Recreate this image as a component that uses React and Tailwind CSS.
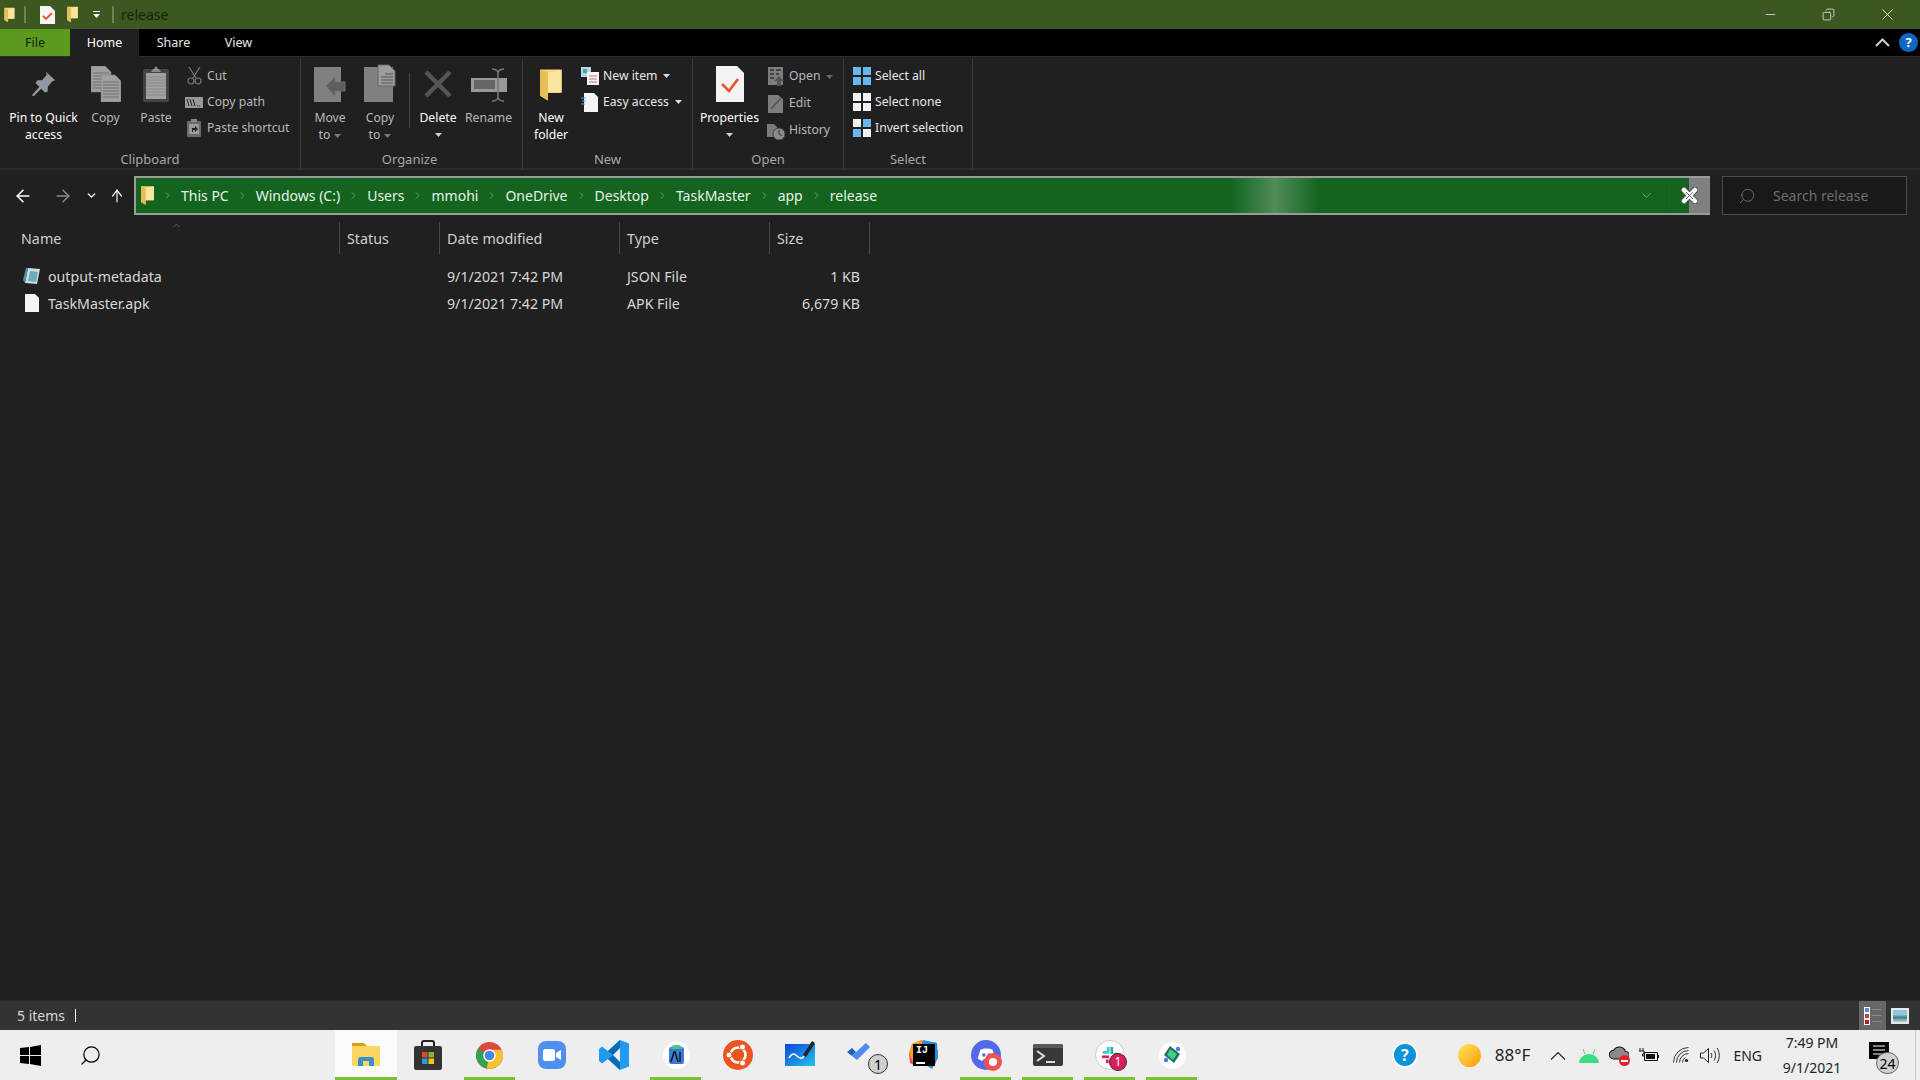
import React from "react";
import { ChevronRight, ChevronDown, ChevronUp, ArrowLeft, ArrowRight, ArrowUp, Search, Minus, X, Copy as CopyI } from "lucide-react";

const Caret = ({ c = "#d0d0d0" }) => (<svg width="7" height="4" viewBox="0 0 7 4" className="inline-block"><path d="M0 0h7L3.5 4z" fill={c} /></svg>);

const Folder = ({ w = 14, h = 22 }) => (
  <svg width={w} height={h} viewBox="0 0 14 22"><path d="M0 1h13v15l-8 0v5L0 18z" fill="#f8d775" /><path d="M5 3l9-2v15H5z" fill="#fbe49b" /><path d="M5 3v18l-5-3V1z" fill="#e8bd56" /></svg>
);

const PinI = () => (<svg width="30" height="28" viewBox="0 0 30 30" className="mb-[4px]"><path d="M17 2l10 9-3 1-5 6 0 5-3 1-4-4-8 8-2-1 8-9-4-4 2-3 5 0 5-6z" fill="#8e9aa0" /></svg>);
const DocLines = ({ x, y, w, h }) => (
  <g><path d={`M${x} ${y}h${w - 6}l6 6v${h - 6}h-${w}z`} fill="#a0a0a0" stroke="#7c7c7c" strokeWidth="0.6" />
    {[...Array(Math.floor((h - 8) / 3))].map((_, i) => <path key={i} d={`M${+x + 2} ${+y + 7 + i * 3}h${w - 4}`} stroke="#6f6f6f" strokeWidth="1" />)}</g>
);
const CopyBig = () => (<svg width="30" height="36" viewBox="0 0 30 36"><DocLines x="0" y="0" w="20" h="26" /><DocLines x="10" y="9" w="20" h="27" /></svg>);
const PasteBig = () => (<svg width="28" height="36" viewBox="0 0 28 36"><rect x="1" y="3" width="26" height="33" rx="2" fill="#444" /><rect x="4" y="7" width="20" height="26" fill="#a2a2a2" /><path d="M4 11h20M4 14h20M4 17h20M4 20h20M4 23h20M4 26h20M4 29h20" stroke="#888" /><path d="M9 6l2-3h1l2-3 2 3h1l2 3z" fill="#8c8c8c" /></svg>);
const MoveBig = () => (<svg width="34" height="36" viewBox="0 0 34 36"><rect x="1" y="1" width="27" height="35" fill="#808080" /><path d="M13 20l9-9v5h10v9H22v5z" fill="#5d5d5d" stroke="#707070" /></svg>);
const CopyToBig = () => (<svg width="34" height="38" viewBox="0 0 34 38"><rect x="1" y="3" width="29" height="35" fill="#808080" /><path d="M15 1h11l6 6v15H15z" fill="#9c9c9c" stroke="#666" /><path d="M22 10h8M18 13h12M18 16h12M18 19h12" stroke="#555" /></svg>);
const DelBig = () => (<svg width="30" height="30" viewBox="0 0 30 30" className="mb-[3px]"><path d="M3 3l24 24M27 3L3 27" stroke="#555" strokeWidth="4.5" /></svg>);
const RenameBig = () => (<svg width="36" height="34" viewBox="0 0 36 34"><rect x="0" y="10" width="36" height="14" fill="#999" /><rect x="3" y="12" width="21" height="9" fill="#666" /><path d="M21 1c3 0 5 1 6 3 1-2 3-3 6-3M27 4v26M21 33c3 0 5-1 6-3 1 2 3 3 6 3" stroke="#777" strokeWidth="1.6" fill="none" /></svg>);

const Big = ({ w, icon, label, label2, caret, bright, iconH = 43 }) => (
  <div className="flex flex-col items-center shrink-0" style={{ width: w }}>
    <div className="flex items-end justify-center" style={{ height: iconH }}>{icon}</div>
    <div className={`mt-[7px] text-center leading-[17px] whitespace-nowrap ${bright ? "text-[#ffffff]" : "text-[#b9b9b9]"}`}>{label}</div>
    {label2 && <div className={`text-center leading-[17px] whitespace-nowrap ${bright ? "text-[#ffffff]" : "text-[#b9b9b9]"}`}>{label2}{caret && <span className="ml-1 align-middle inline-flex"><Caret c="#7a7a7a" /></span>}</div>}
    {!label2 && caret && <div className="leading-[12px] mt-[2px]"><Caret /></div>}
  </div>
);

const Small = ({ icon, label, color = "text-[#b9b9b9]", caret, caretC, gap = "gap-[4px]", h = "h-[26px]" }) => (
  <div className={`flex items-center whitespace-nowrap ${gap} ${h} ${color}`}>
    <span className="w-[18px] h-[20px] flex items-center justify-center shrink-0">{icon}</span>
    <span>{label}</span>
    {caret && <span className="ml-[2px] flex"><Caret c={caretC} /></span>}
  </div>
);

const Group = ({ w, label, children, cls = "", labelCls = "" }) => (
  <div className="shrink-0 flex flex-col border-r border-[#3a3a3a] h-[111px]" style={{ width: w }}>
    <div className={`h-[92px] flex items-start ${cls}`}>{children}</div>
    <div className={`h-[17px] flex items-center justify-center text-[#a8a8a8] text-[13px] ${labelCls}`}>{label}</div>
  </div>
);

const SelIcon = ({ a, b, c, d }) => (
  <svg width="18" height="18" viewBox="0 0 18 18">
    {[[0, 0, a], [10, 0, b], [0, 10, c], [10, 10, d]].map(([x, y, f], i) => <rect key={i} x={x} y={y} width="8" height="8" fill={f} />)}
  </svg>
);
const B = "#68b5f0", W = "#f2f2f2";

const Col = ({ w, children }) => (
  <div className="h-full border-r border-[#4a4a4a] flex items-center shrink-0 pl-[7px] pt-[1px]" style={{ width: w }}>{children}</div>
);
const Cell = ({ w, children, right }) => (
  <div className={`shrink-0 whitespace-nowrap ${right ? "text-right pr-[10px]" : "pl-[7px]"}`} style={{ width: w }}>{children}</div>
);

const Row = ({ icon, name, type, size }) => (
  <div className="flex items-center h-[27px] text-[#d8d8d8] text-[14.2px]">
    <div className="w-[440px] flex items-center pl-[23px] gap-[7px] shrink-0">
      <span className="w-[18px] flex justify-center">{icon}</span>
      <span>{name}</span>
    </div>
    <Cell w={180}>9/1/2021 7:42 PM</Cell>
    <Cell w={150}>{type}</Cell>
    <Cell w={100} right>{size}</Cell>
  </div>
);

const Task = ({ children, on, active, badge }) => (
  <div className={`relative w-[62px] h-full flex items-center justify-center shrink-0 ${active ? "bg-[#fafafa]" : ""}`}>
    {children}
    {badge}
    {on && <div className={`absolute bottom-0 h-[3px] bg-[#76c52b] ${active ? "left-0 right-0" : "left-[5px] right-[6px]"}`} />}
  </div>
);

const Crumb = ({ t }) => (
  <>
    <span className="text-[#e8f2e8]">{t}</span>
    <ChevronRight size={11} strokeWidth={1.4} className="text-[#9dbd9d] mx-[8px]" />
  </>
);

const NumBadge = ({ n, cls }) => <span className={`absolute flex items-center justify-center rounded-full ${cls}`}>{n}</span>;

export default function App() {
  return (
    <div className="w-[1920px] h-[1080px] flex flex-col overflow-hidden bg-[#202020] text-[14px]" style={{ fontFamily: '"Noto Sans", sans-serif' }}>
      {/* title */}
      <div className="h-[29px] bg-[#3c5820] flex items-center shrink-0">
        <div className="ml-[3px]"><Folder w={13} h={16} /></div>
        <div className="ml-[8px] w-[2px] h-[17px] bg-[#6d8357]" />
        <div className="ml-[14px]">
          <svg width="15" height="18" viewBox="0 0 15 18"><path d="M0 0h10l5 5v13H0z" fill="#f4f4f4" /><path d="M3 10l3 3 6-6" stroke="#e4572e" strokeWidth="1.8" fill="none" /></svg>
        </div>
        <div className="ml-[11px]"><Folder w={13} h={17} /></div>
        <div className="ml-[14px] flex flex-col items-center gap-[2px]"><div className="w-[7px] h-[1px] bg-white" /><Caret c="#fff" /></div>
        <div className="ml-[12px] w-[2px] h-[17px] bg-[#6d8357]" />
        <div className="ml-[7px] text-[#16240a] text-[14px]">release</div>
        <div className="ml-auto mr-[3px] flex items-center text-[#f0f0f0]">
          <div className="w-[58px] flex justify-center"><Minus size={15} strokeWidth={1.2} /></div>
          <div className="w-[58px] flex justify-center"><CopyI size={13} strokeWidth={1.4} className="-scale-x-100" /></div>
          <div className="w-[60px] flex justify-center"><X size={19} strokeWidth={1.1} /></div>
        </div>
      </div>
      {/* tabs */}
      <div className="h-[28px] bg-black flex items-center shrink-0 border-b border-[#2c2c2c] text-[#e8e8e8] text-[12.5px]">
        <div className="w-[70px] h-full bg-[#5b9a1f] text-[#10220a] flex items-center justify-center pt-[2px]">File</div>
        <div className="w-[69px] h-[28px] bg-[#202020] text-white flex items-center justify-center pt-[2px]">Home</div>
        <div className="w-[69px] flex justify-center pt-[2px]">Share</div>
        <div className="w-[61px] flex justify-center pt-[2px]">View</div>
        <div className="ml-auto flex items-center gap-[9px]">
          <svg width="15" height="9" viewBox="0 0 15 9"><path d="M1 8l6.5-6.5L14 8" stroke="#cfcfcf" strokeWidth="2" fill="none" /></svg>
          <div className="w-[19px] h-[19px] mr-[2px] rounded-full bg-[#0d68c4] flex items-center justify-center text-white text-[13px] font-bold">?</div>
        </div>
      </div>
      {/* ribbon */}
      <div className="h-[113px] shrink-0 flex border-b-2 border-[#2c2c2c] pt-[2px] text-[12.2px]">
        <Group w={301} label="Clipboard">
          <Big w={87} icon={<PinI />} label="Pin to Quick" label2="access" bright />
          <Big w={37} icon={<CopyBig />} label="Copy" />
          <Big w={64} icon={<PasteBig />} label="Paste" />
          <div className="flex flex-col pt-[4px] ml-[-3px]">
            <Small icon={<svg width="15" height="18" viewBox="0 0 15 18"><path d="M2 0l7 11M13 0L6 11" stroke="#777" strokeWidth="1.2" /><circle cx="4" cy="14" r="3" stroke="#777" fill="none" strokeWidth="1.2" /><circle cx="11" cy="14" r="3" stroke="#777" fill="none" strokeWidth="1.2" /></svg>} label="Cut" />
            <Small icon={<svg width="18" height="11" viewBox="0 0 18 11"><rect width="18" height="11" fill="#999" /><path d="M2 2l2 7M5 2l2 7M8 2l2 7" stroke="#222" /><path d="M12 9h1M14 9h1" stroke="#333" /></svg>} label="Copy path" />
            <Small icon={<svg width="14" height="18" viewBox="0 0 14 18"><rect y="2" width="14" height="16" rx="1" fill="#6a6a6a" /><rect x="2" y="5" width="10" height="10" fill="#999" /><path d="M5 13V9h3V7l3 3-3 3v-2H6v2z" fill="#222" /><rect x="4" width="6" height="3" fill="#888" /></svg>} label="Paste shortcut" />
          </div>
        </Group>
        <Group w={222} label="Organize" labelCls="pr-[4px]">
          <div className="flex pl-[4px]">
            <Big w={50} icon={<MoveBig />} label="Move" label2="to" caret />
            <Big w={50} icon={<CopyToBig />} label="Copy" label2="to" caret />
          </div>
          <div className="ml-[4px] mr-[1px] mt-[14px] w-[1px] h-[55px] bg-[#4a4a4a]" />
          <Big w={54} icon={<DelBig />} label="Delete" caret bright />
          <Big w={47} icon={<RenameBig />} label="Rename" />
        </Group>
        <Group w={170} label="New">
          <Big w={56} icon={<Folder w={24} h={34} />} label="New" label2="folder" bright />
          <div className="flex flex-col pt-[4px] ml-[2px]">
            <Small gap="gap-[4px]" color="text-[#e8e8e8]" icon={<svg width="18" height="18" viewBox="0 0 18 18"><rect width="10" height="10" fill="#b9d6ee" /><rect x="2" y="2" width="4" height="4" fill="#4a8" /><rect x="6" y="5" width="12" height="13" fill="#f5f5f5" /><path d="M8 9h8M8 12h8M8 15h8" stroke="#d07070" /></svg>} label="New item" caret caretC="#ddd" />
            <Small gap="gap-[4px]" color="text-[#e8e8e8]" icon={<svg width="18" height="20" viewBox="0 0 18 20"><path d="M3 1h10l4 4v15H3z" fill="#f5f5f5" /><path d="M0 6h5M1 9h4M0 12h4" stroke="#5aa0e0" /></svg>} label="Easy access" caret caretC="#ddd" />
          </div>
        </Group>
        <Group w={151} label="Open">
          <Big w={73} icon={<svg width="28" height="36" viewBox="0 0 28 36"><path d="M0 0h21l7 7v29H0z" fill="#f4f4f4" /><path d="M6 18l7 7 9-12" stroke="#e4572e" strokeWidth="2.6" fill="none" /></svg>} label="Properties" caret bright />
          <div className="flex flex-col pt-[4px] ml-[1px]">
            <Small h="h-[27px]" gap="gap-[4px]" icon={<svg width="16" height="19" viewBox="0 0 16 19"><rect width="15" height="18" fill="#7d7d7d" /><path d="M2 3h4M2 7h4M2 11h4M8 3h5M8 7h3" stroke="#333" strokeWidth="1.4" /><path d="M11 9l5 5h-3v5H9v-5H6z" fill="#555" /></svg>} label="Open" caret caretC="#6a6a6a" />
            <Small h="h-[27px]" gap="gap-[4px]" icon={<svg width="16" height="18" viewBox="0 0 16 18"><path d="M0 0h10l5 4v14H0z" fill="#7d7d7d" /><path d="M3 14L13 3" stroke="#555" strokeWidth="1.5" /></svg>} label="Edit" />
            <Small h="h-[27px]" gap="gap-[4px]" icon={<svg width="18" height="18" viewBox="0 0 18 18"><path d="M0 2h7l3 3v10H0z" fill="#7a7a7a" /><circle cx="12" cy="12" r="6" fill="#8b8b8b" stroke="#444" /><path d="M12 8v4l3 2" stroke="#333" fill="none" /></svg>} label="History" />
          </div>
        </Group>
        <Group w={129} label="Select" cls="pl-[9px]">
          <div className="flex flex-col pt-[4px] text-[#e8e8e8]">
            <Small color="text-[#e8e8e8]" icon={<SelIcon a={B} b={B} c={B} d={B} />} label="Select all" />
            <Small color="text-[#e8e8e8]" icon={<SelIcon a={W} b={W} c={W} d={W} />} label="Select none" />
            <Small color="text-[#e8e8e8]" icon={<SelIcon a={W} b={B} c={B} d={W} />} label="Invert selection" />
          </div>
        </Group>
      </div>
      {/* address */}
      <div className="h-[52px] shrink-0 flex items-center pr-[13px] pb-[1px]">
        <div className="w-[134px] flex items-center text-white shrink-0 pl-[13px]">
          <ArrowLeft size={20} strokeWidth={1.8} />
          <ArrowRight size={20} strokeWidth={1.8} className="ml-[20px] text-[#8a8a8a]" />
          <ChevronDown size={13} strokeWidth={2.5} className="ml-[12px]" />
          <ArrowUp size={20} strokeWidth={1.8} className="ml-[9px] scale-x-75" />
        </div>
        <div className="relative w-[1576px] h-[39px] border-y-2 border-l-2 border-r-0 border-[#9a9a9a] bg-[#12641f] flex items-center text-[14px] shrink-0 overflow-hidden">
          <div className="ml-[5px]"><Folder w={13} h={21} /></div>
          <ChevronRight size={11} strokeWidth={1.4} className="text-[#9dbd9d] mx-[8px]" />
          <Crumb t="This PC" /><Crumb t="Windows (C:)" /><Crumb t="Users" /><Crumb t="mmohi" /><Crumb t="OneDrive" /><Crumb t="Desktop" /><Crumb t="TaskMaster" /><Crumb t="app" />
          <span className="text-[#e8f2e8]">release</span>
          <div className="absolute left-[1094px] top-0 w-[90px] h-full bg-[linear-gradient(90deg,rgba(255,255,255,0),rgba(255,255,255,0.26),rgba(255,255,255,0))]" />
          <ChevronDown size={15} strokeWidth={1.6} className="absolute right-[56px] text-[#7ea07e]" />
          <div className="absolute right-[43px] top-0 h-full w-[1px] bg-[#1a5a22]" />
          <div className="absolute right-0 top-0 h-full w-[21px] bg-[#808080]" />
          <svg width="17" height="17" viewBox="0 0 17 17" className="absolute right-[12px]"><path d="M3 3l11 11M14 3L3 14" stroke="#555" strokeWidth="6.5" strokeLinecap="round" /><path d="M3 3l11 11M14 3L3 14" stroke="#fff" strokeWidth="4.5" strokeLinecap="round" /><path d="M5 5l7 7M12 5l-7 7" stroke="#666" strokeWidth="1" /></svg>
        </div>
        <div className="ml-[12px] w-[185px] h-[39px] border border-[#4d4d4d] bg-[#191919] flex items-center text-[#6e6e6e]">
          <Search size={18} strokeWidth={1.2} className="ml-[15px] -scale-x-100" />
          <span className="ml-[17px]">Search release</span>
        </div>
      </div>
      {/* list */}
      <div className="flex-1 min-h-0">
        <div className="relative h-[32px] flex items-center text-[#d0d0d0] text-[14.3px]">
          <div className="h-full w-[340px] border-r border-[#4a4a4a] flex items-center pl-[21px] pt-[1px] shrink-0">Name</div>
          <ChevronUp size={11} strokeWidth={1.2} className="absolute left-[171px] top-[-2px] text-[#999]" />
          <Col w={100}>Status</Col>
          <Col w={180}>Date modified</Col>
          <Col w={150}>Type</Col>
          <Col w={100}>Size</Col>
        </div>
        <div className="pt-[9px]">
          <Row name="output-metadata" type="JSON File" size="1 KB" icon={<svg width="19" height="19" viewBox="0 0 18 19"><path d="M5 1l12 1-3 15-12-1z" fill="#c9dde3" /><path d="M5 1L2 16l-2 -3L3 1z" fill="#4b90a8" /><path d="M7 4l8 1-2 10-8-1z" fill="#6fa9bd" /></svg>} />
          <Row name="TaskMaster.apk" type="APK File" size="6,679 KB" icon={<svg width="14" height="18" viewBox="0 0 14 18"><path d="M0 0h10l4 4v14H0z" fill="#f5f5f5" /></svg>} />
        </div>
      </div>
      {/* status */}
      <div className="h-[30px] bg-[#333333] shrink-0 flex items-center border-t border-[#2a2a2a] text-[#d6d6d6]">
        <span className="ml-[17px]">5 items</span>
        <div className="ml-[10px] w-[1px] h-[13px] bg-white" />
        <div className="ml-auto h-full w-[27px] bg-[#676767] flex flex-col justify-center gap-[2px] pl-[6px]">
          {["bg-[#5b8fd0]", "bg-[#b05030]", "bg-[#b02020]"].map((c) => (
            <div key={c} className="flex items-center gap-[3px]"><span className={`w-[4px] h-[4px] ${c} outline outline-1 outline-white`} /><span className="w-[9px] h-[1px] bg-[#8a8a8a]" /></div>
          ))}
        </div>
        <div className="ml-[5px] mr-[11px] w-[18px] h-[16px] border-2 border-[#e8e8e8] bg-[linear-gradient(#8fc6e0_40%,#3f7f80_60%,#bcd5d5)]" />
      </div>
      {/* taskbar */}
      <div className="h-[50px] bg-[#eeeeee] shrink-0 flex items-center relative">
        <svg width="21" height="21" viewBox="0 0 21 21" className="ml-[20px] shrink-0"><path d="M0 3l9-1v8H0zM10 2l11-2v10H10zM0 11h9v8l-9-1zM10 11h11v10l-11-2z" fill="#000" /></svg>
        <Search size={23} strokeWidth={1.3} className="ml-[38px] -scale-x-100 text-black shrink-0" />
        <div className="ml-[233px] h-full flex">
          <Task on active><svg width="28" height="24" viewBox="0 0 28 24"><path d="M0 0h12l3 3H0z" fill="#d99f10" /><rect y="3" width="28" height="20" rx="1" fill="#fbd663" /><path d="M6 23v-6a3 3 0 0 1 3-3h10a3 3 0 0 1 3 3v6h-5v-5h-6v5z" fill="#3a8ed0" /></svg></Task>
          <Task><svg width="28" height="30" viewBox="0 0 28 30"><path d="M8 7V3a2 2 0 0 1 2-2h8a2 2 0 0 1 2 2v4" fill="none" stroke="#222" strokeWidth="2" /><rect y="6" width="28" height="24" rx="2" fill="#333" /><rect x="8" y="12" width="5.5" height="5.5" fill="#e34a26" /><rect x="14.5" y="12" width="5.5" height="5.5" fill="#80b53a" /><rect x="8" y="18.5" width="5.5" height="5.5" fill="#1ba1e2" /><rect x="14.5" y="18.5" width="5.5" height="5.5" fill="#ffc20e" /></svg></Task>
          <Task on><svg width="27" height="27" viewBox="0 0 28 28" className="-translate-x-[1px]"><circle cx="14" cy="14" r="14" fill="#e0483c" /><path d="M14 14L2 7a14 14 0 0 0 9 20.6z" fill="#2da44e" /><path d="M14 14l-3 13.6A14 14 0 0 0 26.6 8L14 8z" fill="#fbc02d" /><circle cx="14" cy="14" r="6.5" fill="#fff" /><circle cx="14" cy="14" r="5" fill="#4a86e8" /></svg></Task>
          <Task><div className="w-[28px] h-[28px] rounded-[8px] bg-[#4f8ff0] flex items-center justify-center"><svg width="18" height="12" viewBox="0 0 18 12"><rect width="12" height="12" rx="2.5" fill="#fff" /><path d="M13 4l5-3v10l-5-3z" fill="#fff" /></svg></div></Task>
          <Task><svg width="30" height="30" viewBox="0 0 30 30"><path d="M21 0l9 3.5v23L21 30 9 19l-6 4.5L0 21V9l3-2.5L9 11z" fill="#1f9cf0" /><path d="M21 0v30L9 19l5-4-5-4z" fill="#0a6cb8" /><path d="M21 8v14l-7-7z" fill="#eeeeee" /></svg></Task>
          <Task on><div className="w-[27px] h-[27px] rounded-full bg-white flex items-center justify-center"><div className="relative w-[15px] h-[17px] bg-[#3a7bd5] rounded-[2px] flex items-center justify-center"><div className="absolute top-[-2px] left-[2px] right-[2px] h-[4px] rounded-t bg-[#4fc08d]" /><svg width="13" height="11" viewBox="0 0 13 11" className="relative mt-[3px]"><path d="M1 11L4 1h1l3 10M10 1v10" stroke="#111" strokeWidth="1.4" fill="none" /></svg></div></div></Task>
          <Task><svg width="30" height="30" viewBox="0 0 30 30"><circle cx="15" cy="15" r="15" fill="#e95420" /><circle cx="15" cy="15" r="7.5" fill="none" stroke="#fff" strokeWidth="2.6" /><circle cx="6" cy="15" r="3" fill="#fff" stroke="#e95420" /><circle cx="19.5" cy="7" r="3" fill="#fff" stroke="#e95420" /><circle cx="19.5" cy="23" r="3" fill="#fff" stroke="#e95420" /></svg></Task>
          <Task><svg width="30" height="30" viewBox="0 0 30 30"><defs><linearGradient id="wb" x1="0" y1="0" x2="1" y2="1"><stop offset="0" stopColor="#0a44dc" /><stop offset="1" stopColor="#25c4e8" /></linearGradient></defs><rect y="4" width="30" height="22" fill="url(#wb)" /><path d="M4 18c3-5 5-5 8-2s5 3 7 0" stroke="#fff" strokeWidth="1.6" fill="none" /><path d="M18 15l9-14 3 2-9 14z" fill="#222" /></svg></Task>
          <Task badge={<NumBadge n="1" cls="left-[37px] top-[24px] w-[20px] h-[20px] bg-[#cfcfcf] border border-[#333] text-black text-[14px]" />}><svg width="23" height="18" viewBox="0 0 23 18" className="-translate-x-[4px] -translate-y-[3px]"><path d="M0 9l5-4 4 4-4 4z" fill="#1f5fbf" /><path d="M5 13l4-4L19 0l4 4L10 17z" fill="#4a8cf0" /></svg></Task>
          <Task><div className="relative w-[30px] h-[30px]"><svg width="30" height="30" viewBox="0 0 30 30" className="absolute inset-0"><path d="M3 4l10-4 3 5 10-3 3 10-3 13-9-4-10 5-6-3-1-9z" fill="#fb3f74" /><path d="M14 0l14 3 1 15-6 11-8-5z" fill="#1f8fe0" /><path d="M0 13l4-10 9-3-2 20-6 5z" fill="#f7a41d" /></svg><div className="absolute left-[4px] top-[4px] w-[22px] h-[22px] bg-black text-white flex flex-col items-start justify-between pl-[3px] pb-[2px] text-[10px] leading-[13px] font-bold" style={{ fontFamily: '"Liberation Mono", monospace' }}><span>IJ</span><span className="w-[9px] h-[2px] bg-white" /></div></div></Task>
          <Task on badge={<span className="absolute left-[29px] top-[23px] w-[18px] h-[18px] rounded-full bg-[#f05252] flex items-center justify-center"><span className="w-[8px] h-[8px] rounded-full bg-white" /></span>}><div className="w-[30px] h-[30px] rounded-full bg-[#5568ea] flex items-center justify-center"><svg width="19" height="14" viewBox="0 0 20 16"><path d="M3 2c4-2 10-2 14 0l3 10-5 3-1-2H6l-1 2-5-3z" fill="#fff" /><circle cx="7" cy="8" r="2" fill="#5568ea" /><circle cx="13" cy="8" r="2" fill="#5568ea" /></svg></div></Task>
          <Task on><div className="w-[30px] h-[22px] rounded-[2px] bg-[#383838] overflow-hidden flex flex-col"><div className="h-[4px] bg-[#5a5a5a]" /><svg width="30" height="18" viewBox="0 0 30 18"><path d="M4 3l7 5-7 5" stroke="#ddd" strokeWidth="2" fill="none" /><path d="M13 14h9" stroke="#ddd" strokeWidth="2" /></svg></div></Task>
          <Task on badge={<NumBadge n="1" cls="left-[30px] top-[23px] w-[18px] h-[18px] bg-[#d81e5b] border border-[#333] text-white text-[12px]" />}><div className="w-[30px] h-[30px] rounded-full bg-white border border-[#ccc] flex items-center justify-center"><svg width="18" height="18" viewBox="0 0 20 20"><path d="M8 1v6H2" stroke="#36c5f0" strokeWidth="3" fill="none" /><path d="M12 1v8" stroke="#2eb67d" strokeWidth="3" /><path d="M14 9h5" stroke="#2eb67d" strokeWidth="3" /><path d="M1 12h8" stroke="#e01e5a" strokeWidth="3" /><path d="M7 15v4" stroke="#e01e5a" strokeWidth="3" /></svg></div></Task>
          <Task on><div className="w-[27px] h-[27px] rounded-full bg-white flex items-center justify-center"><svg width="19" height="18" viewBox="0 0 19 18"><path d="M7 0l10 8-6 9L1 9z" fill="#1f6f5c" /><path d="M7 3l7 5-4 6-6-5z" fill="#3ecf8e" /><circle cx="3" cy="14" r="2.2" fill="#4a7cf0" /><circle cx="15" cy="3" r="2.2" fill="#4a7cf0" /></svg></div></Task>
        </div>
        <div className="ml-auto h-full flex items-center text-black text-[14px] pr-[31px]">
          <div className="w-[26px] h-[26px] mr-[40px] rounded-full bg-white flex items-center justify-center"><div className="w-[22px] h-[22px] rounded-full bg-[#0a93d8] text-white font-bold text-[16px] flex items-center justify-center">?</div></div>
          <div className="w-[23px] h-[23px] rounded-full bg-[linear-gradient(135deg,#ffe36b,#ffb21a_70%,#ff9b05)]" />
          <span className="ml-[14px] text-[17px] text-[#222]">88°F</span>
          <svg width="16" height="9" viewBox="0 0 16 9" className="ml-[20px]"><path d="M1 8.5l7-7 7 7" stroke="#222" strokeWidth="1.1" fill="none" /></svg>
          <svg width="20" height="15" viewBox="0 0 20 15" className="ml-[13px]"><path d="M0 15a10 9 0 0 1 20 0z" fill="#3ddc84" /><path d="M4 1l2 5M16 1l-2 5" stroke="#3ddc84" /></svg>
          <div className="relative ml-[10px] w-[20px] h-[20px]"><svg width="20" height="15" viewBox="0 0 18 14" className="absolute top-0"><path d="M4 13a4 4 0 0 1 0-8 6 6 0 0 1 11 1 3.5 3.5 0 0 1 0 7z" fill="#8a8a8a" stroke="#111" /></svg><span className="absolute right-[-1px] bottom-[-1px] w-[11px] h-[11px] rounded-full bg-[#e3202c] flex items-center justify-center"><span className="w-[7px] h-[2px] bg-white" /></span></div>
          <svg width="20" height="14" viewBox="0 0 20 14" className="ml-[10px]"><path d="M5.5 4.5h13v8h-13z" fill="none" stroke="#111" /><path d="M7 6h9v5H7z" fill="#111" /><path d="M19 7h1v3h-1z" fill="#111" /><path d="M1 0v3M4 0v3M0 3h5v3H3.500v2h2" stroke="#111" fill="none" /></svg>
          <svg width="16" height="16" viewBox="0 0 16 16" className="ml-[14px]"><path d="M.5 15.500a15 15 0 0 1 15-15M3.500 15.500a12 12 0 0 1 12-12M6.500 15.500a9 9 0 0 1 9-9M9.500 15.500a6 6 0 0 1 3-5.200" stroke="#222" fill="none" strokeWidth="0.9" /><circle cx="13.500" cy="13.500" r="1.600" fill="#222" /></svg>
          <svg width="20" height="17" viewBox="0 0 20 17" className="ml-[11px]"><path d="M.5 6h3l5-4.500v14l-5-4.500h-3z" fill="none" stroke="#222" /><path d="M11 6c1 1.500 1 3.500 0 5M14 3.500c2 3 2 7 0 10M17 1c3 4 3 11 0 15" stroke="#222" fill="none" /></svg>
          <span className="ml-[13px] text-[#222]">ENG</span>
          <div className="ml-[16px] w-[68px] text-center text-[#222] leading-[25px]"><div>7:49 PM</div><div>9/1/2021</div></div>
          <div className="relative ml-[23px] w-[20px] h-[26px]"><svg width="20" height="17" viewBox="0 0 20 17" className="absolute top-0"><path d="M0 0h20v17H0z" fill="#000" /><path d="M4 4h12M4 8h12M4 12h12" stroke="#fff" strokeWidth="1.2" /></svg><span className="absolute left-[7px] top-[10px] w-[23px] h-[22px] rounded-full bg-[#cfcfcf] border border-[#666] flex items-center justify-center text-[14px] text-black">24</span></div>
        </div>
        <div className="absolute right-[4px] top-0 h-[50px] w-[1px] bg-[#c8c8c8]" />
      </div>
    </div>
  );
}
